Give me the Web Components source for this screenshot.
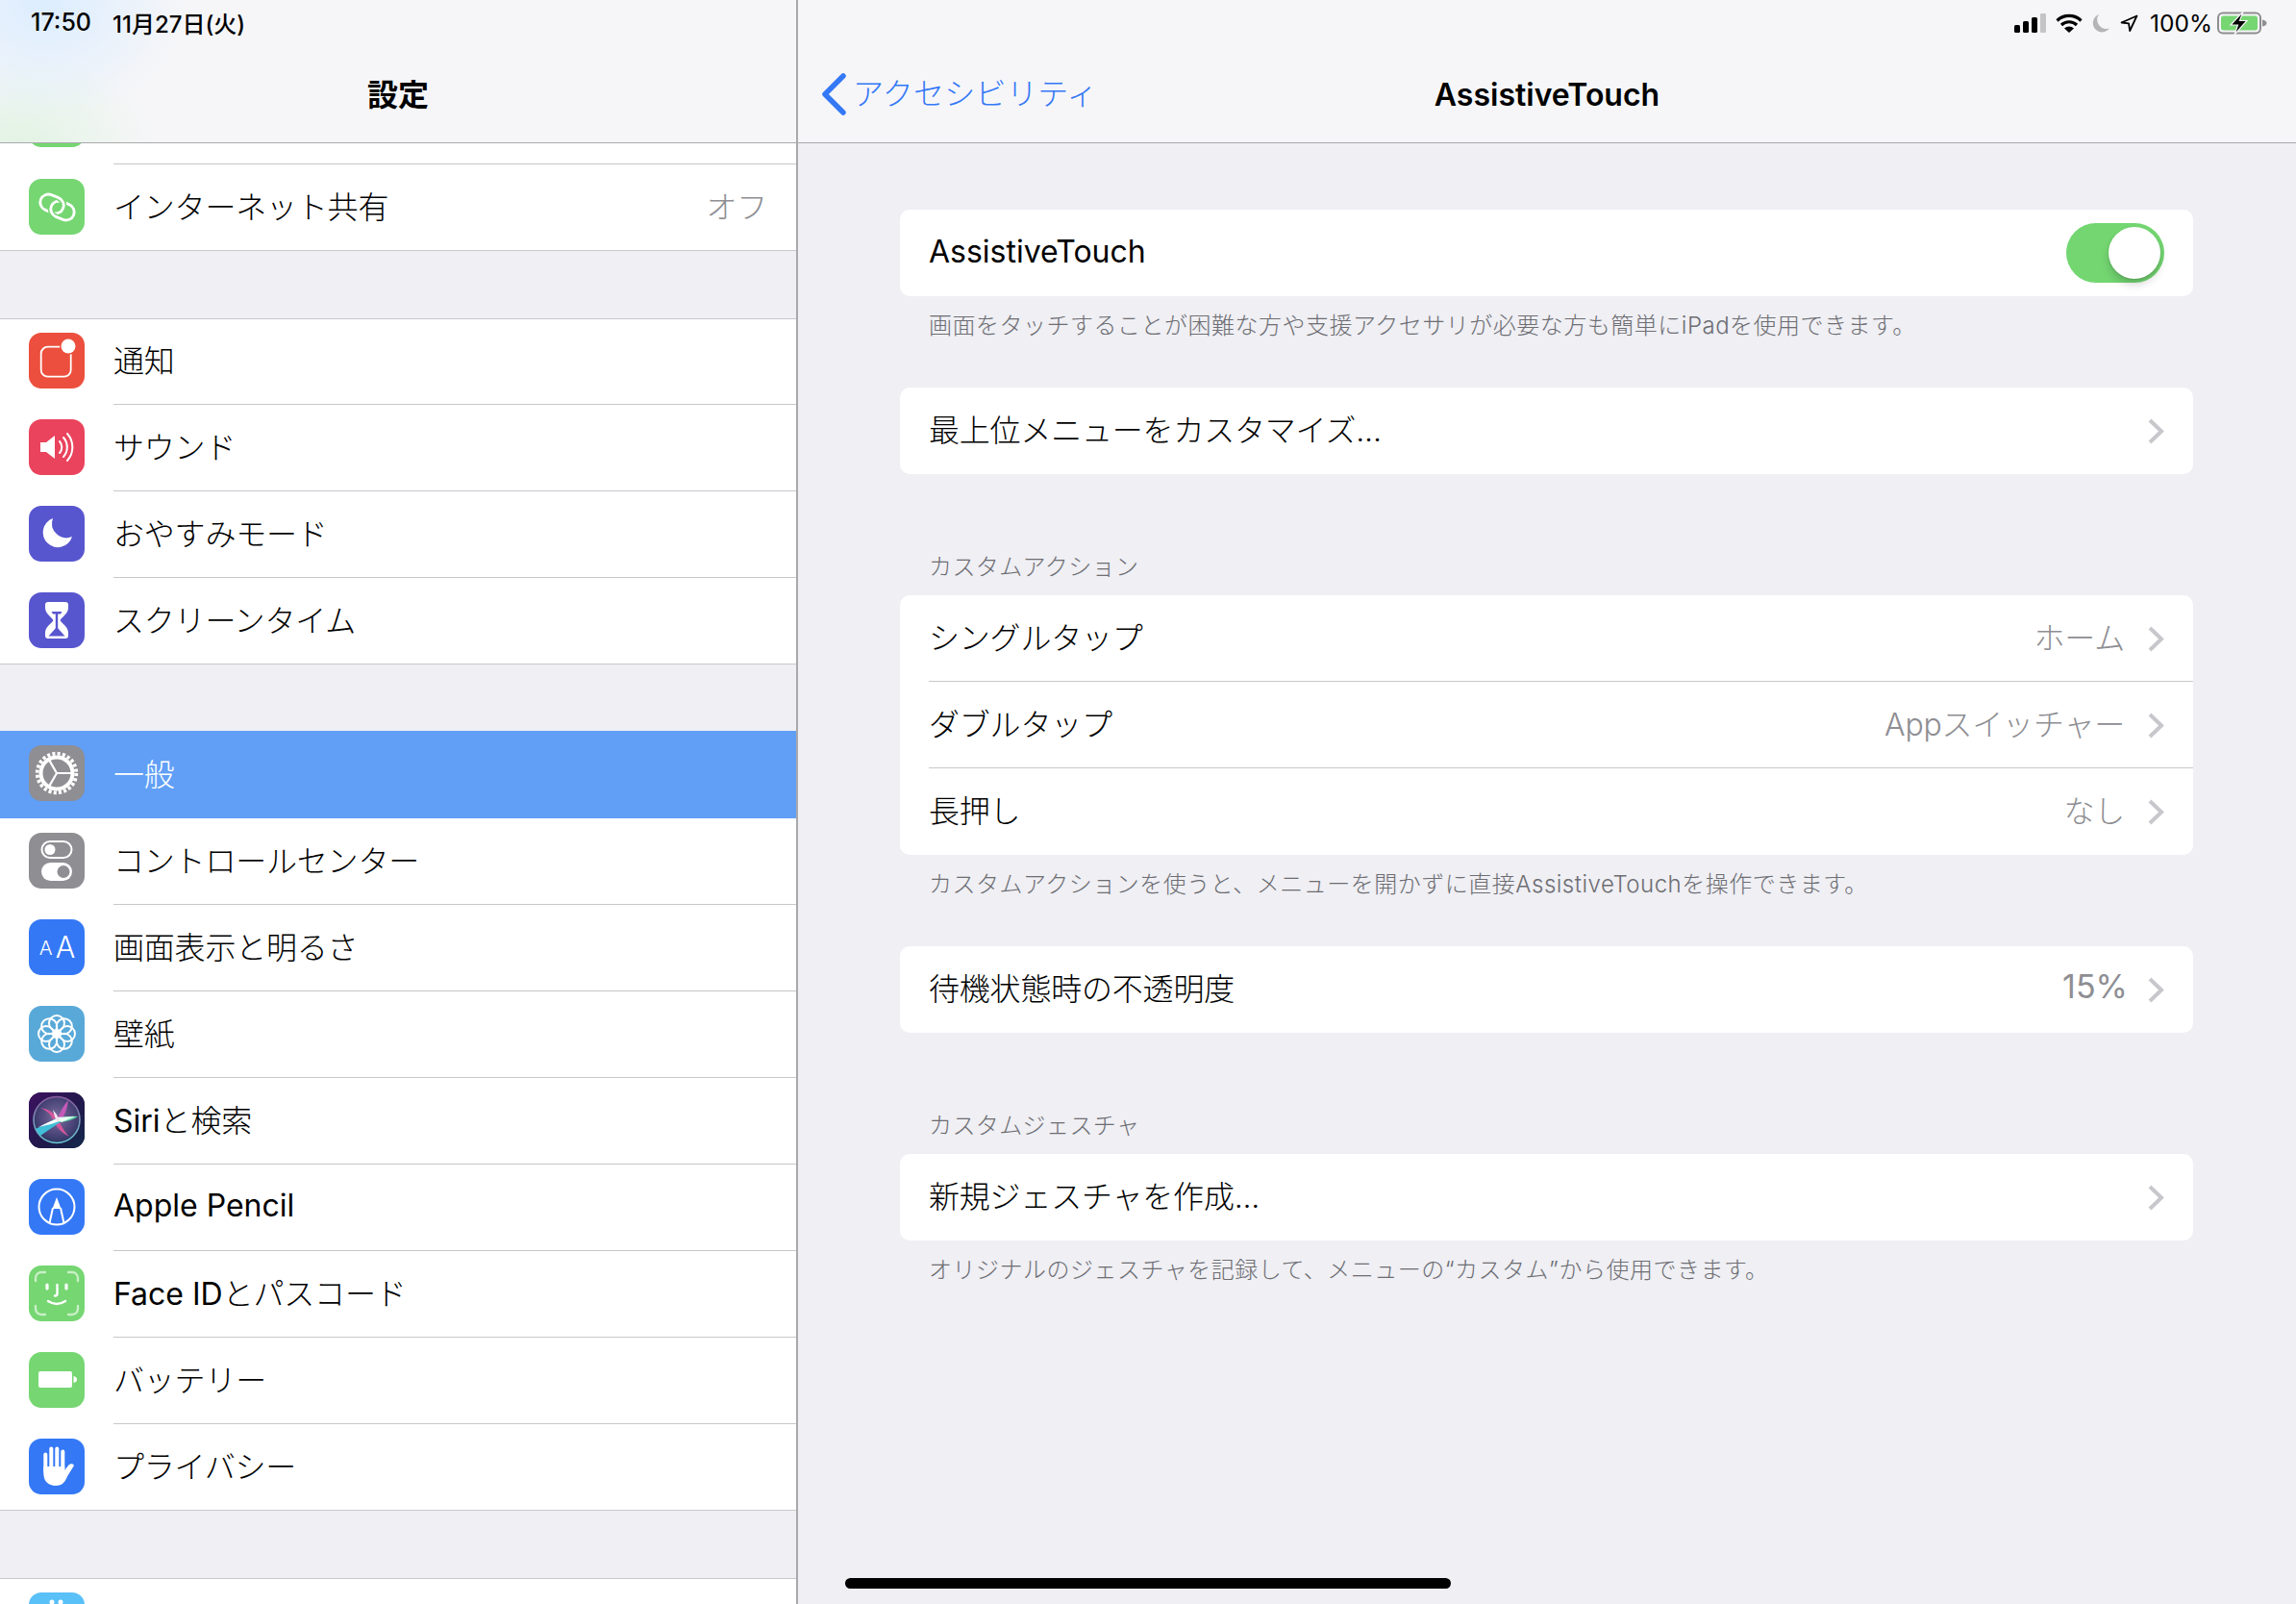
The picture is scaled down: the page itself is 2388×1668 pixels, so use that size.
<!DOCTYPE html>
<html lang="ja">
<head>
<meta charset="utf-8">
<title>AssistiveTouch</title>
<style>
    html, body{ margin: 0; padding: 0; background: #efeff4; }
    body{ font-family: "Inter", "Noto Sans CJK JP", sans-serif; color: #000; }
    .la{ font-weight: 400; letter-spacing: 0; }
</style>
</head>
<body>
<settings-app>
    <settings-sidebar slot="sidebar">
        <settings-stub slot="rows"></settings-stub>
        <settings-row slot="rows" icon="hotspot" color="#76d672" detail="オフ" last>インターネット共有</settings-row>
        <settings-gap slot="rows"></settings-gap>
        <settings-row slot="rows" icon="notify" color="#ec4f3d" first>通知</settings-row>
        <settings-row slot="rows" icon="sound" color="#ea435d">サウンド</settings-row>
        <settings-row slot="rows" icon="moon" color="#5856cf">おやすみモード</settings-row>
        <settings-row slot="rows" icon="hourglass" color="#5856cf" last>スクリーンタイム</settings-row>
        <settings-gap slot="rows" short></settings-gap>
        <settings-row slot="rows" icon="gear" color="#8e8e93" selected>一般</settings-row>
        <settings-row slot="rows" icon="switches" color="#8e8e93">コントロールセンター</settings-row>
        <settings-row slot="rows" icon="aa" color="#3478f6">画面表示と明るさ</settings-row>
        <settings-row slot="rows" icon="flower" color="#59a9d8">壁紙</settings-row>
        <settings-row slot="rows" icon="siri" color="#1c1c3c"><span class="la">Siri</span>と検索</settings-row>
        <settings-row slot="rows" icon="pencil" color="#3478f6"><span class="la">Apple Pencil</span></settings-row>
        <settings-row slot="rows" icon="face" color="#76d672"><span class="la">Face ID</span>とパスコード</settings-row>
        <settings-row slot="rows" icon="battery" color="#76d672">バッテリー</settings-row>
        <settings-row slot="rows" icon="hand" color="#3478f6" last>プライバシー</settings-row>
        <settings-gap slot="rows"></settings-gap>
        <settings-row slot="rows" icon="store" color="#5ac0f8" first></settings-row>
    </settings-sidebar>
    <settings-detail slot="detail">
        <settings-card>
            <card-row first latin><span class="la">AssistiveTouch</span><ios-switch slot="end"></ios-switch></card-row>
        </settings-card>
        <settings-note>画面をタッチすることが困難な方や支援アクセサリが必要な方も簡単にiPadを使用できます。</settings-note>
        <settings-card>
            <card-row first chevron>最上位メニューをカスタマイズ...</card-row>
        </settings-card>
        <settings-heading>カスタムアクション</settings-heading>
        <settings-card>
            <card-row first chevron value="ホーム">シングルタップ</card-row>
            <card-row chevron value="Appスイッチャー">ダブルタップ</card-row>
            <card-row chevron value="なし">長押し</card-row>
        </settings-card>
        <settings-note>カスタムアクションを使うと、メニューを開かずに直接AssistiveTouchを操作できます。</settings-note>
        <settings-card>
            <card-row first chevron value="15%">待機状態時の不透明度</card-row>
        </settings-card>
        <settings-heading>カスタムジェスチャ</settings-heading>
        <settings-card>
            <card-row first chevron>新規ジェスチャを作成...</card-row>
        </settings-card>
        <settings-note>オリジナルのジェスチャを記録して、メニューの“カスタム”から使用できます。</settings-note>
    </settings-detail>
</settings-app>

<script>
const hotspotA = `x="11.500" y="17.500" width="25" height="17" rx="8.500" transform="rotate(22 24 26)"`;
const hotspotB = `x="22.500" y="24.500" width="25" height="17" rx="8.500" transform="rotate(22 35 33)"`;
const icons = {
    hotspot: `<g fill="none" stroke-width="2.800">
            <rect ${hotspotA} stroke="#fff"/>
            <rect ${hotspotB} stroke="#76d672" stroke-width="6"/>
            <rect ${hotspotB} stroke="#fff"/>
            <clipPath id="cross"><rect x="27" y="16" width="12" height="13"/></clipPath>
            <g clip-path="url(#cross)"><rect ${hotspotA} stroke="#76d672" stroke-width="6"/><rect ${hotspotA} stroke="#fff"/></g>
        </g>`,
    notify: `<rect x="12.700" y="14.700" width="31" height="31" rx="7" fill="none" stroke="#fff" stroke-width="1.800"/><circle cx="41" cy="14" r="9" fill="#ec4f3d"/><circle cx="41" cy="14" r="7.500" fill="#fff"/>`,
    sound: `<path d="M12 24h6l9-7v24l-9-7h-6z" fill="#fff"/><g fill="none" stroke="#fff" stroke-width="2" stroke-linecap="round"><path d="M32 23a9 9 0 0 1 0 12"/><path d="M36 19a15 15 0 0 1 0 20"/><path d="M40 15a21 21 0 0 1 0 28"/></g>`,
    moon: `<path d="M25 13A15.500 15.500 0 1 0 45 32A15 15 0 0 1 25 13z" fill="#fff"/>`,
    hourglass: `<path d="M20 10h18q3 0 3 3v3c0 6-6 9-8.500 13 2.500 4 8.500 7 8.500 13v3q0 3-3 3H20q-3 0-3-3v-3c0-6 6-9 8.500-13C23 25 17 22 17 16v-3q0-3 3-3z" fill="#fff"/><path d="M23.500 20h11l-1.500 2.500h-8z" fill="#5856cf"/><rect x="27.800" y="21" width="2.400" height="19" fill="#5856cf"/><path d="M29 36l8.500 9.500h-17z" fill="#5856cf"/>`,
    gear: `<g transform="translate(29 29)"><circle r="16.500" fill="none" stroke="#fff" stroke-width="4"/><circle r="20.300" fill="none" stroke="#fff" stroke-width="3.800" stroke-dasharray="3.100 2.214"/><g stroke="#fff" stroke-width="2.200"><path d="M0 0H16M0 0L-8 13.900M0 0L-8-13.900"/></g></g>`,
    switches: `<rect x="13.500" y="9" width="31" height="17" rx="8.500" fill="none" stroke="#fff" stroke-width="2"/><circle cx="22" cy="17.500" r="5.500" fill="#fff"/><rect x="13" y="31" width="32" height="19" rx="9.500" fill="#fff"/><circle cx="36" cy="40.500" r="6.500" fill="#8e8e93"/>`,
    aa: `<g fill="#fff" font-family="Inter, sans-serif" text-anchor="middle"><text x="17.500" y="36.700" font-size="20.500">A</text><text x="38" y="40" font-size="30.500">A</text></g>`,
    flower: `<g fill="none" stroke="#fff" stroke-width="2"><circle cx="29" cy="29" r="3" fill="#fff"/><circle cx="29" cy="18" r="8"/><circle cx="29" cy="40" r="8"/><circle cx="18" cy="29" r="8"/><circle cx="40" cy="29" r="8"/><circle cx="21.200" cy="21.200" r="8"/><circle cx="36.800" cy="21.200" r="8"/><circle cx="21.200" cy="36.800" r="8"/><circle cx="36.800" cy="36.800" r="8"/></g>`,
    siri: `<defs>
            <linearGradient id="sb" x1="0" y1="0" x2="1" y2="1"><stop offset="0" stop-color="#3d1260"/><stop offset=".55" stop-color="#22184c"/><stop offset="1" stop-color="#132a4a"/></linearGradient>
            <linearGradient id="sr" x1="0" y1="0" x2="0" y2="1"><stop offset="0" stop-color="#8a5a9c"/><stop offset="1" stop-color="#68c8d0"/></linearGradient>
            <radialGradient id="sg" cx="50%" cy="45%" r="55%"><stop offset="0" stop-color="#7a6d9c"/><stop offset=".7" stop-color="#4a4478"/><stop offset="1" stop-color="#2c3660"/></radialGradient>
            <filter id="sf" x="-20%" y="-20%" width="140%" height="140%"><feGaussianBlur stdDeviation=".7"/></filter>
        </defs>
        <rect width="58" height="58" fill="url(#sb)"/>
        <circle cx="29" cy="28.500" r="24" fill="url(#sg)" stroke="url(#sr)" stroke-width="1.600"/>
        <g filter="url(#sf)">
            <path d="M12 16Q26 18 31 29T42 46Q30 40 26 30T12 16z" fill="#d2569c"/>
            <path d="M30 27Q34 16 41 8Q40 20 33 30z" fill="#c45ab8"/>
            <path d="M7 38Q20 32 30 26L34 30Q22 38 12 45z" fill="#3fc0d8"/>
            <path d="M28 28Q40 24 51 25Q44 30 32 31z" fill="#5fd6a8"/>
            <path d="M10 36Q22 30 31 26.500L33 29.500Q22 34 10 36z" fill="#fff"/>
            <path d="M27 26L48 25L34 31z" fill="#e8fff2"/>
            <path d="M25 18Q29 22 32 29L29 30Q26 24 25 18z" fill="#f5e0f0"/>
        </g>`,
    pencil: `<circle cx="29" cy="29" r="18.500" fill="none" stroke="#fff" stroke-width="2"/><path d="M29 19l4.500 12h-9z" fill="#fff"/><path d="M25 30l-3.500 16M33 30l3.500 16" fill="none" stroke="#fff" stroke-width="2"/>`,
    face: `<g fill="none" stroke="#fff" stroke-opacity=".6" stroke-width="2.400" stroke-linecap="round"><path d="M7 16v-3a6 6 0 0 1 6-6h4M41 7h4a6 6 0 0 1 6 6v3M51 42v3a6 6 0 0 1-6 6h-4M17 51h-4a6 6 0 0 1-6-6v-3"/></g><g fill="none" stroke="#fff" stroke-linecap="round"><path d="M19 20v4M39 20v4" stroke-width="3.200"/><path d="M29.500 20v9.500q0 2-2.500 2" stroke-width="2.400"/><path d="M20 37q9 6 18 0" stroke-width="2.400"/></g>`,
    battery: `<rect x="10" y="20" width="35" height="17" rx="2" fill="#fff"/><path d="M46.500 25q3.500.5 3.500 3.500t-3.500 3.500z" fill="#fff"/>`,
    hand: `<g stroke="#fff" stroke-width="4" stroke-linecap="round"><path d="M17.300 16.500V34M23.300 10.500V32M29.300 10.500V32M35.300 13.500V32"/></g><path d="M15.300 30V36C15.300 44 20 49 28 49C35 49 37.500 45 40.500 38.500L47 28C46 25.500 43 25.500 41 28L37.300 33V29H15.300z" fill="#fff"/>`,
    store: `<g fill="#fff"><circle cx="24" cy="10" r="2.500"/><circle cx="33" cy="10" r="2.500"/></g>`
};

const settingsAppTemplate = document.createElement('template');
settingsAppTemplate.innerHTML = `
    <style>
        :host{
            display: grid;
            grid-template-columns: 830px 1fr;
            width: 2388px;
            height: 1668px;
            overflow: hidden;
            position: relative;
        }
        .status{
            position: absolute;
            inset: 0 0 auto 0;
            height: 46px;
            z-index: 2;
        }
        .indicator{
            position: absolute;
            left: 879px;
            top: 1641px;
            width: 630px;
            height: 11px;
            border-radius: 6px;
            background: #000;
        }
    </style>
    <slot name="sidebar"></slot>
    <slot name="detail"></slot>
    <status-bar class="status"></status-bar>
    <div class="indicator"></div>
`;
class SettingsApp extends HTMLElement{
    constructor(){
        super();
        this.attachShadow({mode: 'open'});
        this.shadowRoot.append(settingsAppTemplate.content.cloneNode(true));
    }
}

const statusBarTemplate = document.createElement('template');
statusBarTemplate.innerHTML = `
    <style>
        :host{
            display: flex;
            align-items: center;
            font-size: 24px;
            font-weight: 500;
            color: #000;
            padding: 0 30px 0 32px;
        }
        .time{ margin-right: 22px; font-size: 25px; }
        .right{
            margin-left: auto;
            display: flex;
            align-items: center;
            margin-top: 2px;
        }
        svg{ display: block; }
    </style>
    <span class="time">17:50</span>
    <span>11月27日(火)</span>
    <div class="right">
        <svg width="33" height="20" viewBox="0 0 33 20" style="margin-right:10px">
            <rect x="0" y="12" width="6" height="8" rx="1.500"/><rect x="9" y="8" width="6" height="12" rx="1.500"/><rect x="18" y="4" width="6" height="16" rx="1.500"/><rect x="27" y="0" width="6" height="20" rx="1" fill="#c4c4c6"/>
        </svg>
        <svg width="28" height="20" viewBox="0 0 28 20" style="margin-right:10px">
            <g fill="none" stroke="#000" stroke-width="3.200"><path d="M1.500 7.500a18 18 0 0 1 25 0"/><path d="M6 12a11.500 11.500 0 0 1 16 0"/></g><path d="M14 20l-5-4.500a7.500 7.500 0 0 1 10 0z"/>
        </svg>
        <svg width="18" height="19" viewBox="0 0 18 19" style="margin-right:11px">
            <path d="M7 0a9.500 9.500 0 1 0 11 14.500c-1 .3-1.800.4-2.500.4A9.500 9.500 0 0 1 7 0z" fill="#b4b4b6"/>
        </svg>
        <svg width="19" height="19" viewBox="0 0 19 19" style="margin-right:12px">
            <path d="M17.500 1.500L1.500 8.500l7.500.8 1.200 7.700z" fill="none" stroke="#000" stroke-width="1.800" stroke-linejoin="round"/>
        </svg>
        <span style="margin-right:5px;font-weight:400;font-size:24.500px">100%</span>
        <svg width="52" height="24" viewBox="0 0 52 24">
            <rect x="1" y="1.500" width="44" height="21" rx="5" fill="none" stroke="#8e8e90" stroke-width="2"/>
            <rect x="4" y="4.500" width="38" height="15" rx="2.500" fill="#76d672"/>
            <path d="M47 8.500q4.500 1 4.500 3.500T47 15.500z" fill="#8e8e90"/>
            <path d="M27 0L14 14h7.500L18 24l13-14.500h-7.500z" fill="#000" stroke="#f5f5f8" stroke-width="1.200"/>
        </svg>
    </div>
`;
class StatusBar extends HTMLElement{
    constructor(){
        super();
        this.attachShadow({mode: 'open'});
        this.shadowRoot.append(statusBarTemplate.content.cloneNode(true));
    }
}

const navBarTemplate = document.createElement('template');
navBarTemplate.innerHTML = `
    <style>
        :host{
            display: block;
            box-sizing: border-box;
            height: 149px;
            position: relative;
            background: #f6f6f8;
            border-bottom: 1px solid #a9a9ac;
            flex: none;
        }
        .title{
            position: absolute;
            left: 0;
            right: 0;
            top: 77px;
            line-height: 44px;
            text-align: center;
            font-size: 32px;
            font-weight: 600;
        }
        ::slotted([slot=start]){
            position: absolute;
            left: 24px;
            top: 76px;
        }
    </style>
    <slot name="start"></slot>
    <div class="title"><slot></slot></div>
`;
class NavBar extends HTMLElement{
    constructor(){
        super();
        this.attachShadow({mode: 'open'});
        this.shadowRoot.append(navBarTemplate.content.cloneNode(true));
    }
}

const sidebarTemplate = document.createElement('template');
sidebarTemplate.innerHTML = `
    <style>
        :host{
            display: flex;
            flex-direction: column;
            height: 1668px;
            overflow: hidden;
            border-right: 2px solid #a9a9ac;
            box-sizing: border-box;
            background: #efeff4;
        }
        nav-bar{
            background:
                radial-gradient(ellipse 150px 120px at 45px 5px, #dcedff 0%, rgba(220,237,255,0) 100%),
                radial-gradient(ellipse 140px 95px at 20px 148px, #e2f3e4 0%, rgba(226,243,228,0) 100%),
                #f6f6f8;
        }
    </style>
    <nav-bar>設定</nav-bar>
    <slot name="rows"></slot>
`;
class SettingsSidebar extends HTMLElement{
    constructor(){
        super();
        this.attachShadow({mode: 'open'});
        this.shadowRoot.append(sidebarTemplate.content.cloneNode(true));
    }
}

// the row scrolled under the nav bar: only the foot of its icon shows
const stubTemplate = document.createElement('template');
stubTemplate.innerHTML = `
    <style>
        :host{
            display: block;
            height: 22px;
            background: #fff;
            position: relative;
            overflow: hidden;
            flex: none;
        }
        .foot{
            width: 58px;
            height: 58px;
            margin: -54px 0 0 30px;
            background: #76d672;
            border-radius: 13px;
        }
        .line{
            position: absolute;
            left: 118px;
            right: 0;
            bottom: 0;
            height: 1px;
            background: #c8c7cc;
        }
    </style>
    <div class="foot"></div>
    <div class="line"></div>
`;
class SettingsStub extends HTMLElement{
    constructor(){
        super();
        this.attachShadow({mode: 'open'});
        this.shadowRoot.append(stubTemplate.content.cloneNode(true));
    }
}

const gapTemplate = document.createElement('template');
gapTemplate.innerHTML = `
    <style>
        :host{
            display: block;
            height: 70px;
            background: #efeff4;
            flex: none;
        }
        :host([short]){ height: 69px; }
    </style>
`;
class SettingsGap extends HTMLElement{
    constructor(){
        super();
        this.attachShadow({mode: 'open'});
        this.shadowRoot.append(gapTemplate.content.cloneNode(true));
    }
}

const settingsRowTemplate = document.createElement('template');
settingsRowTemplate.innerHTML = `
    <style>
        :host{
            display: flex;
            align-items: center;
            box-sizing: border-box;
            height: 90px;
            background: #fff;
            flex: none;
            position: relative;
            font-size: 32px;
            font-weight: 300;
            letter-spacing: -.2px;
            color: #000;
            padding: 0 30px 3px;
        }
        :host([selected]){
            height: 91px;
            background: #619ff6;
            color: #fff;
        }
        .icon{
            width: 58px;
            height: 58px;
            border-radius: 13px;
            overflow: hidden;
            margin-right: 30px;
            flex: none;
        }
        .icon svg{ display: block; }
        .text{ margin-bottom: 3px; }
        .detail{
            margin: 0 0 3px auto;
            color: #8e8e93;
        }
        .line, .top{
            position: absolute;
            left: 118px;
            right: 0;
            bottom: 0;
            height: 1px;
            background: #c8c7cc;
        }
        .top{
            left: 0;
            top: 0;
            bottom: auto;
            display: none;
        }
        :host([first]) .top{ display: block; }
        :host([last]) .line{ left: 0; }
        :host([selected]) .line{ display: none; }
    </style>
    <div class="top"></div>
    <div class="icon"></div>
    <span class="text"><slot></slot></span>
    <span class="detail"></span>
    <div class="line"></div>
`;
class SettingsRow extends HTMLElement{
    constructor(){
        super();
        this.attachShadow({mode: 'open'});
        this.shadowRoot.append(settingsRowTemplate.content.cloneNode(true));
    }
    connectedCallback(){
        let icon = this.shadowRoot.querySelector('.icon');
        icon.style.background = this.getAttribute('color');
        icon.innerHTML = `<svg width="58" height="58" viewBox="0 0 58 58">${icons[this.getAttribute('icon')]}</svg>`;
        this.shadowRoot.querySelector('.detail').textContent = this.getAttribute('detail') || '';
    }
}

const detailTemplate = document.createElement('template');
detailTemplate.innerHTML = `
    <style>
        :host{
            display: flex;
            flex-direction: column;
            height: 1668px;
            background: #efeff4;
        }
        .back{
            display: flex;
            align-items: center;
            color: #3478f6;
            font-size: 32px;
            font-weight: 300;
            line-height: 44px;
        }
        .back svg{ margin-right: 7px; }
        .back span{ letter-spacing: .3px; }
        .body{
            padding: 69px 107px 0 106px;
            display: flex;
            flex-direction: column;
        }
    </style>
    <nav-bar>
        <div class="back" slot="start">
            <svg width="26" height="44" viewBox="0 0 26 44"><path d="M23 3L4 22l19 19" fill="none" stroke="#3478f6" stroke-width="5.500" stroke-linecap="round" stroke-linejoin="round"/></svg>
            <span>アクセシビリティ</span>
        </div>
        AssistiveTouch
    </nav-bar>
    <div class="body"><slot></slot></div>
`;
class SettingsDetail extends HTMLElement{
    constructor(){
        super();
        this.attachShadow({mode: 'open'});
        this.shadowRoot.append(detailTemplate.content.cloneNode(true));
    }
}

const cardTemplate = document.createElement('template');
cardTemplate.innerHTML = `
    <style>
        :host{
            display: block;
            background: #fff;
            border-radius: 10px;
            overflow: hidden;
        }
    </style>
    <slot></slot>
`;
class SettingsCard extends HTMLElement{
    constructor(){
        super();
        this.attachShadow({mode: 'open'});
        this.shadowRoot.append(cardTemplate.content.cloneNode(true));
    }
}

const cardRowTemplate = document.createElement('template');
cardRowTemplate.innerHTML = `
    <style>
        :host{
            display: flex;
            align-items: center;
            box-sizing: border-box;
            height: 90px;
            position: relative;
            padding: 0 30px;
            font-size: 32px;
            font-weight: 300;
            letter-spacing: -.2px;
            color: #000;
        }
        .text{ margin-bottom: 7px; }
        :host([latin]) .text{ margin-bottom: 3px; }
        .end{
            margin-left: auto;
            display: flex;
            align-items: center;
        }
        .value{
            color: #8e8e93;
            margin-bottom: 7px;
        }
        .chevron{
            margin-left: 24px;
            display: none;
        }
        :host([chevron]) .chevron{ display: block; }
        .line{
            position: absolute;
            left: 30px;
            right: 0;
            top: -1px;
            height: 1px;
            background: #c8c7cc;
        }
        :host([first]) .line{ display: none; }
    </style>
    <div class="line"></div>
    <span class="text"><slot></slot></span>
    <div class="end">
        <span class="value"></span>
        <slot name="end"></slot>
        <svg class="chevron" width="17" height="27" viewBox="0 0 17 27"><path d="M2 2l12 11.500L2 25" fill="none" stroke="#c7c7cc" stroke-width="4"/></svg>
    </div>
`;
class CardRow extends HTMLElement{
    constructor(){
        super();
        this.attachShadow({mode: 'open'});
        this.shadowRoot.append(cardRowTemplate.content.cloneNode(true));
    }
    connectedCallback(){
        let value = this.shadowRoot.querySelector('.value');
        let text = this.getAttribute('value') || '';
        value.textContent = text;
        if(/^[\x00-\x7f]+$/.test(text)){
            // plain latin value
            value.style.fontWeight = 400;
            value.style.fontSize = '34px';
            value.style.letterSpacing = 0;
            value.style.marginRight = '-3px';
        }
    }
}

const switchTemplate = document.createElement('template');
switchTemplate.innerHTML = `
    <style>
        :host{
            display: block;
            width: 102px;
            height: 62px;
            border-radius: 31px;
            background: #73d671;
            position: relative;
        }
        .knob{
            position: absolute;
            right: 4px;
            top: 4px;
            width: 54px;
            height: 54px;
            border-radius: 50%;
            background: #fff;
            box-shadow: 0 6px 8px rgba(0,0,0,.16), 0 1px 2px rgba(0,0,0,.14);
        }
    </style>
    <div class="knob"></div>
`;
class IosSwitch extends HTMLElement{
    constructor(){
        super();
        this.attachShadow({mode: 'open'});
        this.shadowRoot.append(switchTemplate.content.cloneNode(true));
    }
}

const noteTemplate = document.createElement('template');
noteTemplate.innerHTML = `
    <style>
        :host{
            display: block;
            box-sizing: border-box;
            height: 95px;
            padding: 15px 30px 0;
            font-size: 24px;
            font-weight: 300;
            line-height: 32px;
            letter-spacing: .5px;
            color: #6d6d72;
        }
    </style>
    <slot></slot>
`;
class SettingsNote extends HTMLElement{
    constructor(){
        super();
        this.attachShadow({mode: 'open'});
        this.shadowRoot.append(noteTemplate.content.cloneNode(true));
    }
}

const headingTemplate = document.createElement('template');
headingTemplate.innerHTML = `
    <style>
        :host{
            display: block;
            box-sizing: border-box;
            height: 126px;
            padding: 81px 30px 0;
            font-size: 24px;
            font-weight: 300;
            line-height: 32px;
            letter-spacing: .4px;
            color: #6d6d72;
        }
    </style>
    <slot></slot>
`;
class SettingsHeading extends HTMLElement{
    constructor(){
        super();
        this.attachShadow({mode: 'open'});
        this.shadowRoot.append(headingTemplate.content.cloneNode(true));
    }
}

customElements.define('nav-bar', NavBar);
customElements.define('status-bar', StatusBar);
customElements.define('settings-stub', SettingsStub);
customElements.define('settings-gap', SettingsGap);
customElements.define('settings-row', SettingsRow);
customElements.define('settings-sidebar', SettingsSidebar);
customElements.define('settings-card', SettingsCard);
customElements.define('card-row', CardRow);
customElements.define('ios-switch', IosSwitch);
customElements.define('settings-note', SettingsNote);
customElements.define('settings-heading', SettingsHeading);
customElements.define('settings-detail', SettingsDetail);
customElements.define('settings-app', SettingsApp);
</script>
</body>
</html>
